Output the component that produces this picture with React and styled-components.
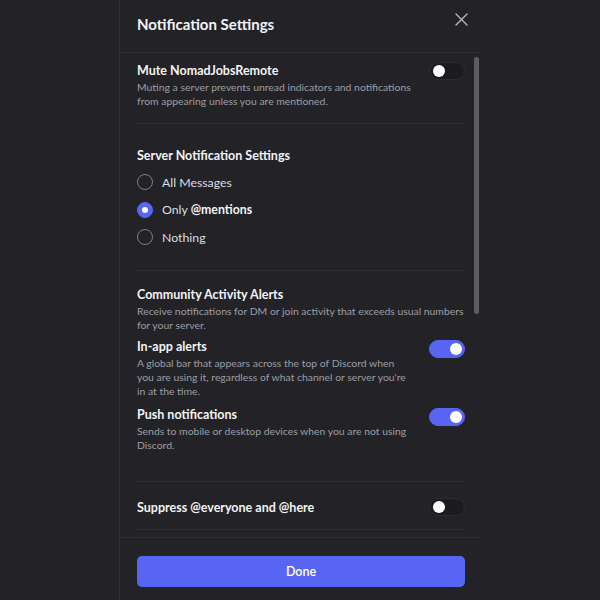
import React from 'react';
import styled, { createGlobalStyle } from 'styled-components';

const GlobalStyle = createGlobalStyle`
  html, body {
    margin: 0;
    padding: 0;
    background: #232327;
    font-family: Lato, 'Noto Sans', sans-serif;
    color: #f2f3f5;
  }
`;

const Page = styled.div`
  display: flex;
  height: 600px;
  overflow: hidden;
  padding-left: 119px;
`;

const Modal = styled.div`
  width: 361px;
  display: flex;
  flex-direction: column;
  border-left: 1px solid #2e2e33;
  background: #232327;
`;

const Header = styled.div`
  height: 53px;
  display: flex;
  align-items: center;
  justify-content: space-between;
  padding: 0 12px 4px 17px;
  box-sizing: border-box;
  border-bottom: 1px solid #2e2f34;
`;

const Title = styled.h1`
  margin: 0;
  font-size: 15px;
  font-weight: 700;
  color: #f2f3f5;
`;

const CloseButton = styled.button`
  background: none;
  border: 0;
  padding: 0;
  width: 16px;
  height: 16px;
  margin-top: -9px;
  color: #b5bac1;
  display: flex;
  align-items: center;
  justify-content: center;
`;

const Body = styled.div`
  position: relative;
  height: 484px;
  overflow: hidden;
  padding: 0 16px 0 17px;
  border-bottom: 1px solid #2e2f34;
`;

const ScrollThumb = styled.div`
  position: absolute;
  right: 2px;
  top: 4px;
  width: 5px;
  height: 257px;
  border-radius: 3px;
  background: #5c5c63;
`;

const Section = styled.div`
  padding: ${(p) => p.$pad};
  border-bottom: 1px solid #2e2f34;
`;

const Row = styled.div`
  display: flex;
  justify-content: space-between;
  align-items: flex-start;
  gap: 12px;
  margin-top: ${(p) => p.$mt || 0}px;
`;

const Label = styled.div`
  font-size: 12.5px;
  line-height: 16px;
  font-weight: 700;
  color: #f2f3f5;
  margin-top: ${(p) => p.$mt || 0}px;
`;

const Desc = styled.p`
  margin: 1px 0 0;
  font-size: 10.4px;
  line-height: 14px;
  color: #9c9ea5;
  max-width: ${(p) => p.$max || 330}px;
`;

const Toggle = styled.div`
  flex-shrink: 0;
  width: 36px;
  height: 18px;
  box-sizing: border-box;
  border-radius: 9px;
  background: ${(p) => (p.$on ? '#5865f2' : '#1c1c20')};
  border: 1px solid ${(p) => (p.$on ? '#5865f2' : '#2c2c31')};
  position: relative;
  margin-top: ${(p) => p.$mt || 0}px;

  &::after {
    content: '';
    position: absolute;
    top: 2px;
    left: ${(p) => (p.$on ? '20px' : '3px')};
    width: 12px;
    height: 12px;
    border-radius: 50%;
    background: #fff;
  }
`;

const RadioList = styled.div`
  display: flex;
  flex-direction: column;
  gap: 7.5px;
  margin-top: 8px;
`;

const RadioRow = styled.label`
  display: flex;
  align-items: center;
  gap: 9px;
  height: 20px;
  font-size: 12.3px;
  color: #dbdee1;
  b {
    font-weight: 700;
    color: #f2f3f5;
  }
`;

const RadioDot = styled.span`
  width: 16px;
  height: 16px;
  box-sizing: border-box;
  border-radius: 50%;
  border: 1.5px solid ${(p) => (p.$checked ? '#5865f2' : '#7d7f86')};
  background: ${(p) => (p.$checked ? '#5865f2' : 'transparent')};
  display: flex;
  align-items: center;
  justify-content: center;
  &::after {
    content: '';
    display: ${(p) => (p.$checked ? 'block' : 'none')};
    width: 6px;
    height: 6px;
    border-radius: 50%;
    background: #fff;
  }
`;

const Footer = styled.div`
  padding: 18px 16px 0 17px;
`;

const DoneButton = styled.button`
  width: 100%;
  height: 31px;
  border: 0;
  border-radius: 5px;
  background: #5865f2;
  color: #fff;
  font-family: inherit;
  font-size: 12.5px;
  font-weight: 600;
`;

const radios = [
  { label: 'All Messages' },
  { label: 'Only', bold: '@mentions', checked: true },
  { label: 'Nothing' },
];

export default function App() {
  return (
    <>
      <GlobalStyle />
      <Page>
        <Modal>
          <Header>
            <Title>Notification Settings</Title>
            <CloseButton aria-label="Close">
              <svg width="13" height="13" viewBox="0 0 13 13" fill="none" stroke="currentColor" strokeWidth="1.4" strokeLinecap="round">
                <path d="M1 1l11 11M12 1L1 12" />
              </svg>
            </CloseButton>
          </Header>
          <Body>
            <ScrollThumb />
            <Section $pad="10px 0 15px">
              <Row>
                <div>
                  <Label>Mute NomadJobsRemote</Label>
                  <Desc $max={290}>
                    Muting a server prevents unread indicators and notifications from appearing unless you are mentioned.
                  </Desc>
                </div>
                <Toggle $mt={-1} />
              </Row>
            </Section>
            <Section $pad="24px 0 23px">
              <Label>Server Notification Settings</Label>
              <RadioList>
                {radios.map((r) => (
                  <RadioRow key={r.label}>
                    <RadioDot $checked={r.checked} />
                    <span>
                      {r.label} {r.bold && <b>{r.bold}</b>}
                    </span>
                  </RadioRow>
                ))}
              </RadioList>
            </Section>
            <Section $pad="16px 0 29px">
              <Label>Community Activity Alerts</Label>
              <Desc>Receive notifications for DM or join activity that exceeds usual numbers for your server.</Desc>
              <Row $mt={7}>
                <div>
                  <Label>In-app alerts</Label>
                  <Desc $max={275}>
                    A global bar that appears across the top of Discord when you are using it, regardless of what channel or server you're in at the time.
                  </Desc>
                </div>
                <Toggle $on $mt={1} />
              </Row>
              <Row $mt={9}>
                <div>
                  <Label>Push notifications</Label>
                  <Desc $max={275}>Sends to mobile or desktop devices when you are not using Discord.</Desc>
                </div>
                <Toggle $on $mt={1} />
              </Row>
            </Section>
            <Section $pad="16px 0 13px">
              <Row>
                <Label $mt={2}>Suppress @everyone and @here</Label>
                <Toggle />
              </Row>
            </Section>
          </Body>
          <Footer>
            <DoneButton>Done</DoneButton>
          </Footer>
        </Modal>
      </Page>
    </>
  );
}
